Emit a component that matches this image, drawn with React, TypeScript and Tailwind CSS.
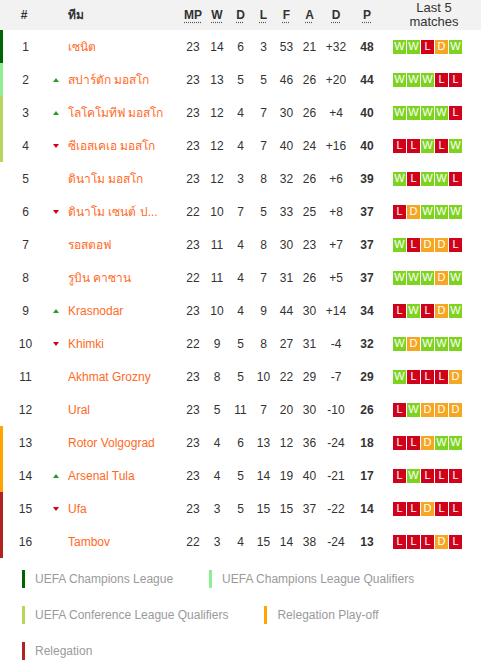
type Row = {
  pos: number;
  move?: 'up' | 'down';
  team: string;
  mp: number;
  w: number;
  d: number;
  l: number;
  f: number;
  a: number;
  gd: string;
  p: number;
  form: string;
  bar: string;
};

const rows: Row[] = [
  { pos: 1, team: 'เซนิต', mp: 23, w: 14, d: 6, l: 3, f: 53, a: 21, gd: '+32', p: 48, form: 'WWLDW', bar: 'border-l-[#006400]' },
  { pos: 2, move: 'up', team: 'สปาร์ตัก มอสโก', mp: 23, w: 13, d: 5, l: 5, f: 46, a: 26, gd: '+20', p: 44, form: 'WWWLL', bar: 'border-l-[#90ee90]' },
  { pos: 3, move: 'up', team: 'โลโคโมทีฟ มอสโก', mp: 23, w: 12, d: 4, l: 7, f: 30, a: 26, gd: '+4', p: 40, form: 'WWWWL', bar: 'border-l-[#b5d658]' },
  { pos: 4, move: 'down', team: 'ซีเอสเคเอ มอสโก', mp: 23, w: 12, d: 4, l: 7, f: 40, a: 24, gd: '+16', p: 40, form: 'LLWLW', bar: 'border-l-[#b5d658]' },
  { pos: 5, team: 'ดินาโม มอสโก', mp: 23, w: 12, d: 3, l: 8, f: 32, a: 26, gd: '+6', p: 39, form: 'WLWWL', bar: 'border-l-transparent' },
  { pos: 6, move: 'down', team: 'ดินาโม เซนต์ ป...', mp: 22, w: 10, d: 7, l: 5, f: 33, a: 25, gd: '+8', p: 37, form: 'LDWWW', bar: 'border-l-transparent' },
  { pos: 7, team: 'รอสตอฟ', mp: 23, w: 11, d: 4, l: 8, f: 30, a: 23, gd: '+7', p: 37, form: 'WLDDL', bar: 'border-l-transparent' },
  { pos: 8, team: 'รูบิน คาซาน', mp: 22, w: 11, d: 4, l: 7, f: 31, a: 26, gd: '+5', p: 37, form: 'WWWDW', bar: 'border-l-transparent' },
  { pos: 9, move: 'up', team: 'Krasnodar', mp: 23, w: 10, d: 4, l: 9, f: 44, a: 30, gd: '+14', p: 34, form: 'LWLDW', bar: 'border-l-transparent' },
  { pos: 10, move: 'down', team: 'Khimki', mp: 22, w: 9, d: 5, l: 8, f: 27, a: 31, gd: '-4', p: 32, form: 'WDWWW', bar: 'border-l-transparent' },
  { pos: 11, team: 'Akhmat Grozny', mp: 23, w: 8, d: 5, l: 10, f: 22, a: 29, gd: '-7', p: 29, form: 'WLLLD', bar: 'border-l-transparent' },
  { pos: 12, team: 'Ural', mp: 23, w: 5, d: 11, l: 7, f: 20, a: 30, gd: '-10', p: 26, form: 'LWDDD', bar: 'border-l-transparent' },
  { pos: 13, team: 'Rotor Volgograd', mp: 23, w: 4, d: 6, l: 13, f: 12, a: 36, gd: '-24', p: 18, form: 'LLDWW', bar: 'border-l-[#ffa500]' },
  { pos: 14, move: 'up', team: 'Arsenal Tula', mp: 23, w: 4, d: 5, l: 14, f: 19, a: 40, gd: '-21', p: 17, form: 'LWLLL', bar: 'border-l-[#ffa500]' },
  { pos: 15, move: 'down', team: 'Ufa', mp: 23, w: 3, d: 5, l: 15, f: 15, a: 37, gd: '-22', p: 14, form: 'LLDLL', bar: 'border-l-[#b22222]' },
  { pos: 16, team: 'Tambov', mp: 22, w: 3, d: 4, l: 15, f: 14, a: 38, gd: '-24', p: 13, form: 'LLLDL', bar: 'border-l-[#b22222]' },
];

const formColor: Record<string, string> = {
  W: 'bg-[#7ed321]',
  L: 'bg-[#d0021b]',
  D: 'bg-[#f5a623]',
};

const legend = [
  { label: 'UEFA Champions League', color: 'bg-[#006400]' },
  { label: 'UEFA Champions League Qualifiers', color: 'bg-[#90ee90]' },
  { label: 'UEFA Conference League Qualifiers', color: 'bg-[#b5d658]' },
  { label: 'Relegation Play-off', color: 'bg-[#ffa500]' },
  { label: 'Relegation', color: 'bg-[#b22222]' },
];

function Arrow({ dir }: { dir?: 'up' | 'down' }) {
  if (!dir) return null;
  return dir === 'up' ? (
    <div className="w-0 h-0 border-l-[3px] border-r-[3px] border-b-[4px] border-l-transparent border-r-transparent border-b-[#2a9a2a]" />
  ) : (
    <div className="w-0 h-0 border-l-[3px] border-r-[3px] border-t-[4px] border-l-transparent border-r-transparent border-t-[#d0021b]" />
  );
}

function Abbr({ children }: { children: string }) {
  return <span className="underline decoration-dotted decoration-[#555] underline-offset-[3px]">{children}</span>;
}

export default function App() {
  return (
    <div
      className="w-[481px] bg-white text-[12px] text-[#333]"
      style={{ fontFamily: '"Liberation Sans", Arial, "Noto Sans", "DejaVu Sans", sans-serif' }}
    >
      {/* Header */}
      <div className="flex items-center h-[30px] bg-[#f2f2f2] font-bold text-[#333]">
        <div className="w-[48px] text-center">#</div>
        <div className="w-[16px]" />
        <div className="w-[117px] pl-[4px]">ทีม</div>
        <div className="w-[24px] text-center"><Abbr>MP</Abbr></div>
        <div className="w-[24px] text-center"><Abbr>W</Abbr></div>
        <div className="w-[23px] text-center"><Abbr>D</Abbr></div>
        <div className="w-[23px] text-center"><Abbr>L</Abbr></div>
        <div className="w-[23px] text-center"><Abbr>F</Abbr></div>
        <div className="w-[23px] text-center"><Abbr>A</Abbr></div>
        <div className="w-[30px] text-center"><Abbr>D</Abbr></div>
        <div className="w-[32px] text-center"><Abbr>P</Abbr></div>
        <div className="w-[98px] pl-[4px] text-center leading-[14px] font-normal text-[13px]">
          Last 5
          <br />
          matches
        </div>
      </div>

      {/* Rows */}
      {rows.map((r) => (
        <div key={r.pos} className={`flex items-center h-[33px] border-l-[3px] ${r.bar}`}>
          <div className="w-[45px] text-center">{r.pos}</div>
          <div className="w-[16px] flex justify-center">
            <Arrow dir={r.move} />
          </div>
          <div className="w-[117px] pl-[4px] text-[#ff6a1f] whitespace-nowrap overflow-hidden">{r.team}</div>
          <div className="w-[24px] text-center">{r.mp}</div>
          <div className="w-[24px] text-center">{r.w}</div>
          <div className="w-[23px] text-center">{r.d}</div>
          <div className="w-[23px] text-center">{r.l}</div>
          <div className="w-[23px] text-center">{r.f}</div>
          <div className="w-[23px] text-center">{r.a}</div>
          <div className="w-[30px] text-center">{r.gd}</div>
          <div className="w-[32px] text-center font-bold">{r.p}</div>
          <div className="flex gap-[1px] pl-[10px]">
            {r.form.split('').map((c, i) => (
              <div
                key={i}
                className={`w-[13px] h-[14px] flex items-center justify-center text-white text-[11px] leading-none ${formColor[c]}`}
              >
                {c}
              </div>
            ))}
          </div>
        </div>
      ))}

      {/* Legend */}
      <div className="flex flex-wrap gap-y-[18px] pl-[22px] pt-[12px] pb-[12px]">
        {legend.map((l) => (
          <div key={l.label} className="flex items-center gap-[10px] mr-[36px]">
            <div className={`w-[3px] h-[18px] ${l.color}`} />
            <span className="text-[#9a9a9a] text-[12px]">{l.label}</span>
          </div>
        ))}
      </div>
    </div>
  );
}
